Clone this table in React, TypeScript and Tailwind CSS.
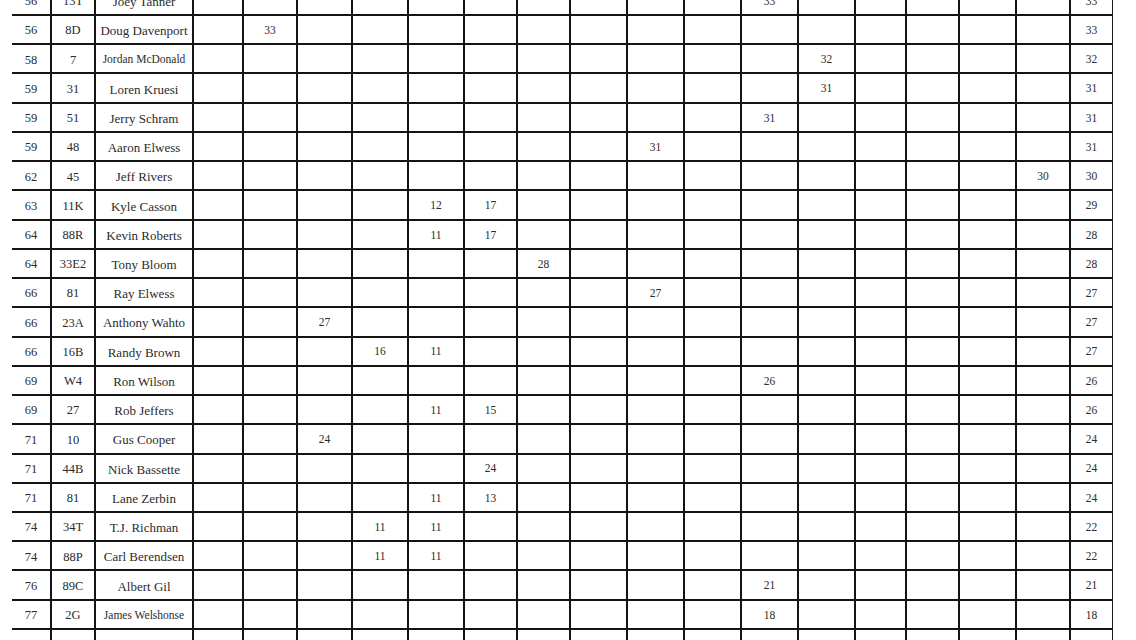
type Row = {
  pos: string;
  num: string;
  name: string;
  small?: boolean;
  races: Record<number, string>;
  total: string;
};

const ROWS: Row[] = [
  { pos: '56', num: '13T', name: 'Joey Tanner', races: { 10: '33' }, total: '33' },
  { pos: '56', num: '8D', name: 'Doug Davenport', races: { 1: '33' }, total: '33' },
  { pos: '58', num: '7', name: 'Jordan McDonald', small: true, races: { 11: '32' }, total: '32' },
  { pos: '59', num: '31', name: 'Loren Kruesi', races: { 11: '31' }, total: '31' },
  { pos: '59', num: '51', name: 'Jerry Schram', races: { 10: '31' }, total: '31' },
  { pos: '59', num: '48', name: 'Aaron Elwess', races: { 8: '31' }, total: '31' },
  { pos: '62', num: '45', name: 'Jeff Rivers', races: { 15: '30' }, total: '30' },
  { pos: '63', num: '11K', name: 'Kyle Casson', races: { 4: '12', 5: '17' }, total: '29' },
  { pos: '64', num: '88R', name: 'Kevin Roberts', races: { 4: '11', 5: '17' }, total: '28' },
  { pos: '64', num: '33E2', name: 'Tony Bloom', races: { 6: '28' }, total: '28' },
  { pos: '66', num: '81', name: 'Ray Elwess', races: { 8: '27' }, total: '27' },
  { pos: '66', num: '23A', name: 'Anthony Wahto', races: { 2: '27' }, total: '27' },
  { pos: '66', num: '16B', name: 'Randy Brown', races: { 3: '16', 4: '11' }, total: '27' },
  { pos: '69', num: 'W4', name: 'Ron Wilson', races: { 10: '26' }, total: '26' },
  { pos: '69', num: '27', name: 'Rob Jeffers', races: { 4: '11', 5: '15' }, total: '26' },
  { pos: '71', num: '10', name: 'Gus Cooper', races: { 2: '24' }, total: '24' },
  { pos: '71', num: '44B', name: 'Nick Bassette', races: { 5: '24' }, total: '24' },
  { pos: '71', num: '81', name: 'Lane Zerbin', races: { 4: '11', 5: '13' }, total: '24' },
  { pos: '74', num: '34T', name: 'T.J. Richman', races: { 3: '11', 4: '11' }, total: '22' },
  { pos: '74', num: '88P', name: 'Carl Berendsen', races: { 3: '11', 4: '11' }, total: '22' },
  { pos: '76', num: '89C', name: 'Albert Gil', races: { 10: '21' }, total: '21' },
  { pos: '77', num: '2G', name: 'James Welshonse', small: true, races: { 10: '18' }, total: '18' },
  { pos: '78', num: '5', name: 'Dale Heinrich', races: { 5: '17' }, total: '17' },
];

const RACE_COUNT = 16;

function TableRow({ row }: { row: Row }) {
  const cell = 'flex items-center justify-center pt-[2px] border-r-2 border-[#141414] whitespace-nowrap overflow-hidden';
  return (
    <div className="grid h-[29.24px] grid-cols-[40px_44px_98px_50px_54px_55px_56px_56px_53px_53px_57px_57px_57px_57px_57px_51px_53px_57px_54px_42px] border-b-2 border-[#141414]">
      <div className={`${cell} text-[12.5px]`}>{row.pos}</div>
      <div className={`${cell} text-[12.5px]`}>{row.num}</div>
      <div className={`${cell} ${row.small ? 'text-[11.5px]' : 'text-[13px]'}`}>{row.name}</div>
      {Array.from({ length: RACE_COUNT }, (_, i) => (
        <div key={i} className={`${cell} text-[11.5px]`}>
          {row.races[i] ?? ''}
        </div>
      ))}
      <div className="flex items-center justify-center pt-[2px] border-r-[1.5px] border-[#1a1a1a] text-[11.5px]">
        {row.total}
      </div>
    </div>
  );
}

export default function App() {
  return (
    <div className="h-[640px] w-[1136px] overflow-hidden bg-white">
      <div
        className="ml-[12px] -mt-[13.24px] w-[1101px] leading-none text-[#2b2b2b]"
        style={{ fontFamily: '"Liberation Serif", "Times New Roman", serif' }}
      >
        {ROWS.map((row, i) => (
          <TableRow key={i} row={row} />
        ))}
      </div>
    </div>
  );
}
